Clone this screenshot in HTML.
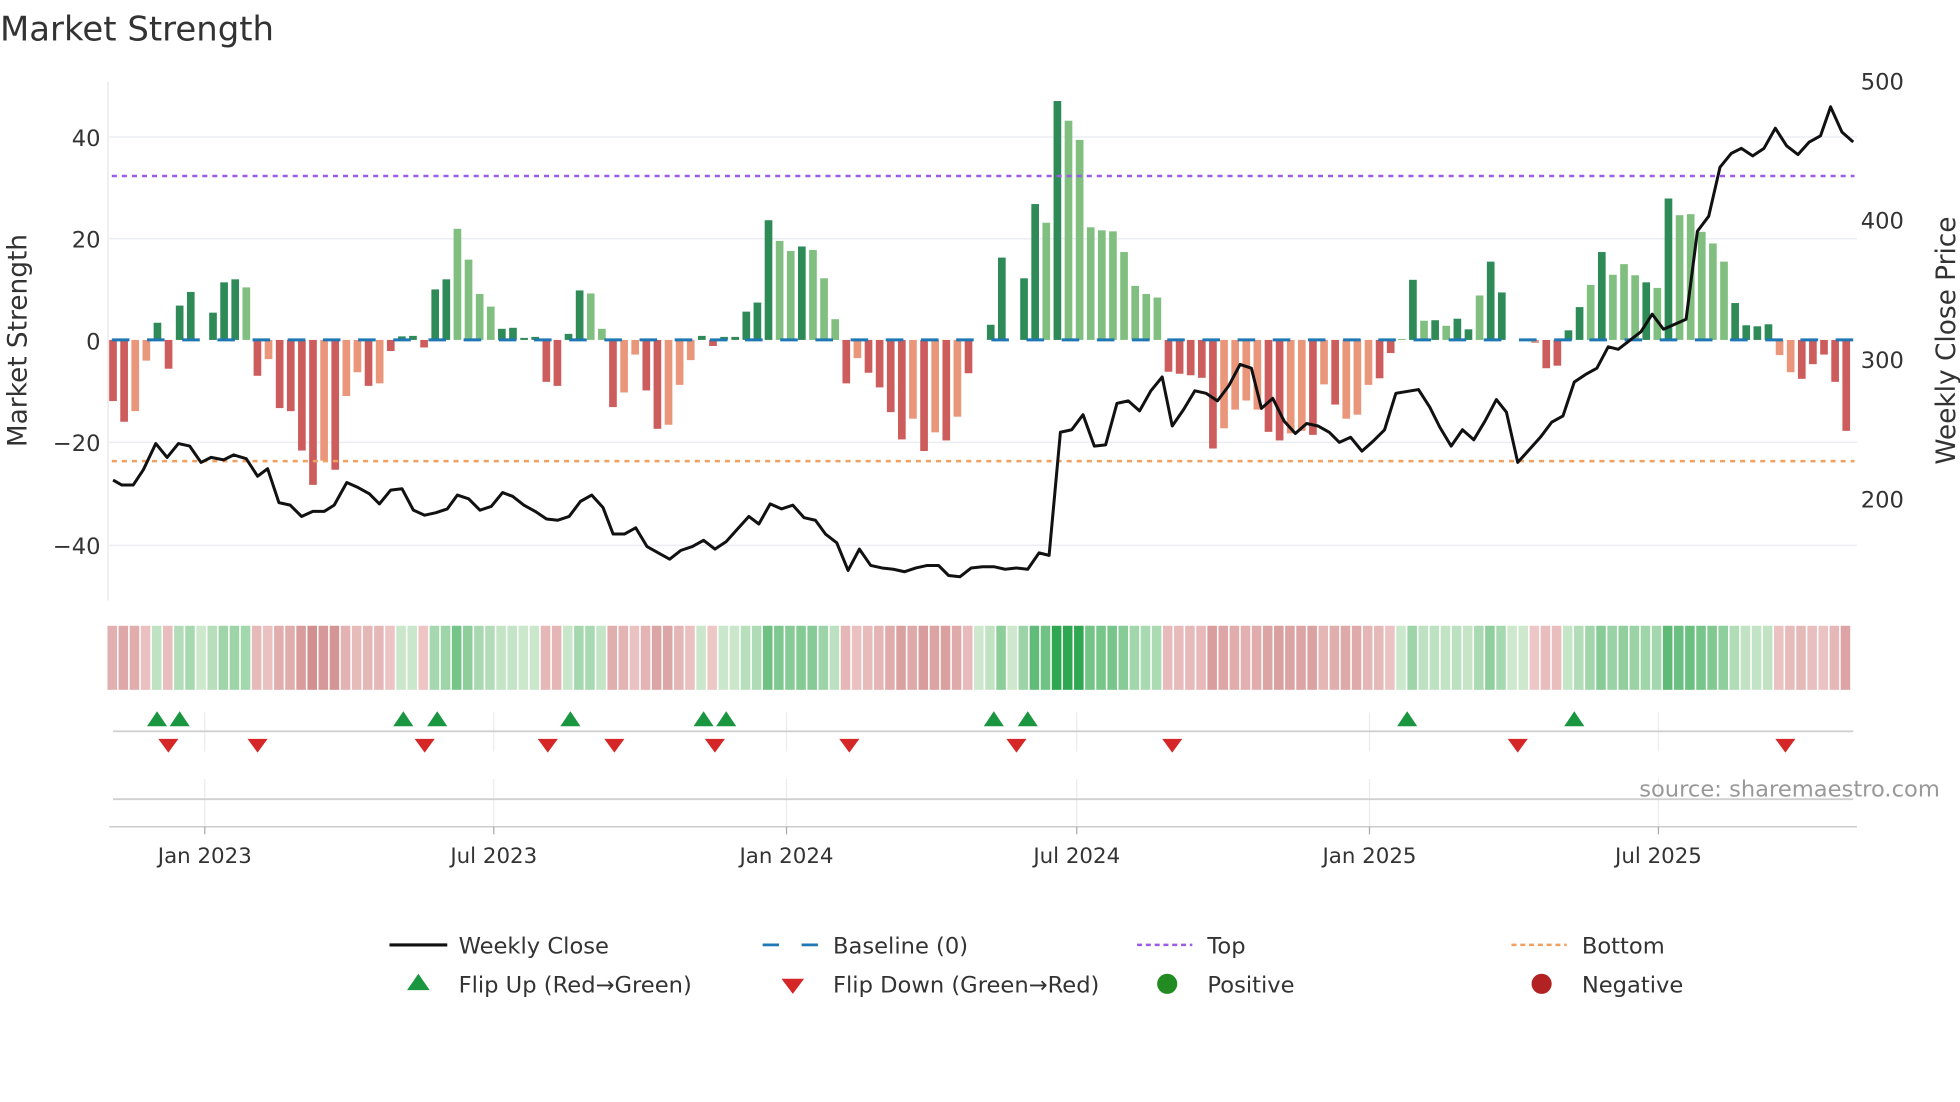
<!DOCTYPE html>
<html><head><meta charset="utf-8"><style>
html,body{margin:0;padding:0;background:#fff;width:1960px;height:1102px;overflow:hidden}
svg{display:block;font-family:"DejaVu Sans","Liberation Sans",sans-serif}
</style></head><body>
<svg id="s" width="1960" height="1102" viewBox="0 0 1560 877" xmlns="http://www.w3.org/2000/svg">
<text x="0" y="32" font-size="27" fill="#333">Market Strength</text>
<g stroke="#ebedf3" stroke-width="1.2">
<line x1="87" y1="109" x2="1478" y2="109"/><line x1="87" y1="190" x2="1478" y2="190"/>
<line x1="87" y1="352" x2="1478" y2="352"/><line x1="87" y1="434" x2="1478" y2="434"/>
</g>
<line x1="86" y1="65" x2="86" y2="478" stroke="#e6e6e6" stroke-width="1"/>
<g font-size="18" fill="#333" text-anchor="end">
<text x="80" y="116">40</text><text x="80" y="197">20</text><text x="80" y="278">0</text>
<text x="80" y="359">−20</text><text x="80" y="441">−40</text>
</g>
<g font-size="18" fill="#333">
<text x="1481" y="71">500</text><text x="1481" y="182">400</text><text x="1481" y="293">300</text><text x="1481" y="404">200</text>
</g>
<text transform="translate(21,271) rotate(-90)" font-size="21" fill="#333" text-anchor="middle">Market Strength</text>
<text transform="translate(1556,271) rotate(-90)" font-size="21" fill="#333" text-anchor="middle">Weekly Close Price</text>
<g id="bars"></g>
<line x1="89" y1="270.5" x2="1476" y2="270.5" stroke="#1f77b4" stroke-width="2.4" stroke-dasharray="14,14"/>
<line x1="89" y1="140" x2="1476" y2="140" stroke="#9b5de5" stroke-width="2" stroke-dasharray="4,4"/>
<line x1="89" y1="367" x2="1476" y2="367" stroke="#f0a060" stroke-width="2" stroke-dasharray="4,4"/>
<polyline fill="none" stroke="#111" stroke-width="2.4" stroke-linejoin="round" points="90,382 97,386 106,386 114,374 124,353 133,364 142,353 151,355 160,368 168,364 178,366 186,362 196,365 205,379 213,373 222,400 231,402 240,411 249,407 258,407 266,402 276,384 285,388 294,393 302,401 311,390 320,389 329,406 338,410 347,408 356,405 364,394 373,397 382,406 391,403 400,392 408,395 417,402 426,407 435,413 444,414 453,411 462,399 471,394 480,404 488,425 497,425 506,420 515,435 524,440 533,445 542,438 551,435 560,430 569,437 578,431 587,421 596,411 604,417 613,401 622,405 631,402 640,412 649,414 657,425 666,432 675,454 684,437 693,450 702,452 711,453 720,455 729,452 738,450 747,450 755,458 764,459 773,452 782,451 791,451 800,453 809,452 818,453 827,440 835,442 844,344 853,342 862,330 871,355 880,354 889,321 898,319 907,327 916,311 925,300 933,339 942,326 951,311 960,313 969,319 978,307 987,290 996,293 1004,325 1013,317 1022,335 1031,345 1040,337 1049,339 1058,344 1066,352 1075,348 1084,359 1093,351 1102,342 1111,313 1129,310 1138,324 1146,340 1155,355 1164,342 1173,350 1182,335 1191,318 1199,328 1208,368 1217,358 1226,348 1235,336 1244,331 1253,304 1262,298 1271,293 1280,276 1288,278 1297,271 1306,264 1315,250 1324,262 1333,258 1342,254 1351,184 1360,172 1369,133 1378,122 1386,118 1395,124 1404,118 1413,102 1422,116 1431,123 1440,113 1449,108 1457,85 1466,105 1475,113"/>
<g id="strip"></g>
<g stroke="#ececec" stroke-width="1">
<line x1="163" y1="567" x2="163" y2="598"/><line x1="393" y1="567" x2="393" y2="598"/><line x1="626" y1="567" x2="626" y2="598"/>
<line x1="857" y1="567" x2="857" y2="598"/><line x1="1090" y1="567" x2="1090" y2="598"/><line x1="1320" y1="567" x2="1320" y2="598"/>
<line x1="163" y1="620" x2="163" y2="658"/><line x1="393" y1="620" x2="393" y2="658"/><line x1="626" y1="620" x2="626" y2="658"/>
<line x1="857" y1="620" x2="857" y2="658"/><line x1="1090" y1="620" x2="1090" y2="658"/><line x1="1320" y1="620" x2="1320" y2="658"/>
</g>
<line x1="90" y1="582" x2="1475" y2="582" stroke="#d0d0d0" stroke-width="1.5"/>
<line x1="90" y1="636" x2="1475" y2="636" stroke="#d0d0d0" stroke-width="1.5"/>
<line x1="87" y1="658" x2="1478" y2="658" stroke="#ccc" stroke-width="1.2"/>
<g id="tri"></g>
<g stroke="#aaa" stroke-width="1">
<line x1="163" y1="658" x2="163" y2="664"/><line x1="393" y1="658" x2="393" y2="664"/><line x1="626" y1="658" x2="626" y2="664"/>
<line x1="857" y1="658" x2="857" y2="664"/><line x1="1090" y1="658" x2="1090" y2="664"/><line x1="1320" y1="658" x2="1320" y2="664"/>
</g>
<g font-size="17" fill="#333" text-anchor="middle">
<text x="163" y="687">Jan 2023</text><text x="393" y="687">Jul 2023</text><text x="626" y="687">Jan 2024</text>
<text x="857" y="687">Jul 2024</text><text x="1090" y="687">Jan 2025</text><text x="1320" y="687">Jul 2025</text>
</g>
<text x="1544" y="634" font-size="18" fill="#999" text-anchor="end">source: sharemaestro.com</text>
<g font-size="18" fill="#333">
<line x1="310" y1="752" x2="356" y2="752" stroke="#111" stroke-width="2.5"/><text x="365" y="759">Weekly Close</text>
<line x1="607" y1="752" x2="651" y2="752" stroke="#1f77b4" stroke-width="2.2" stroke-dasharray="13,18"/><text x="663" y="759">Baseline (0)</text>
<line x1="905" y1="752" x2="949" y2="752" stroke="#9b5de5" stroke-width="2" stroke-dasharray="4,3"/><text x="961" y="759">Top</text>
<line x1="1203" y1="752" x2="1247" y2="752" stroke="#f0a060" stroke-width="2" stroke-dasharray="4,3"/><text x="1259" y="759">Bottom</text>
<polygon points="324,788 342,788 333,775" fill="#1a9641"/><text x="365" y="790">Flip Up (Red→Green)</text>
<polygon points="622,779 640,779 631,791" fill="#d62728"/><text x="663" y="790">Flip Down (Green→Red)</text>
<circle cx="929" cy="783" r="8" fill="#228b22"/><text x="961" y="790">Positive</text>
<circle cx="1227" cy="783" r="8" fill="#b22222"/><text x="1259" y="790">Negative</text>
</g>
</svg>
<script>
var V=[-12.1,-16.2,-14.1,-4.1,3.4,-5.7,6.8,9.5,0,5.4,11.4,12,10.4,-7.1,-3.8,-13.5,-14.1,-21.9,-28.7,-23.9,-25.7,-11.1,-6.4,-9.1,-8.6,-2.2,0.7,0.8,-1.5,10,12,22,15.9,9.1,6.6,2.2,2.4,0.4,0.6,-8.3,-9.1,
1.2,9.8,9.2,2.2,-13.3,-10.4,-2.9,-10,-17.6,-16.8,-8.9,-4,0.8,-1.2,0.6,0.6,5.6,7.4,23.7,19.6,17.6,18.5,17.8,12.2,4.1,-8.6,-3.6,-6.5,-9.4,-14.3,-19.7,-15.6,-22,-18.3,-19.9,-15.2,-6.6,0,3,16.3,0,12.2,26.9,
23.2,47.3,43.4,39.6,22.3,21.7,21.5,17.4,10.7,9.1,8.4,-6.3,-6.7,-7,-7.5,-21.5,-17.5,-13.8,-12,-13.8,-18.2,-19.9,-18.5,-18,-18.8,-8.8,-12.8,-15.6,-14.8,-8.9,-7.6,-2.6,0.2,11.9,3.8,3.9,2.8,4.2,2.1,8.8,15.5,9.4,
0,0,-0.6,-5.6,-5.1,1.9,6.5,10.9,17.4,12.9,15,12.8,11.4,10.3,28,24.7,24.9,21.4,19.1,15.5,7.3,2.9,2.7,3.1,-3,-6.4,-7.7,-4.8,-2.9,-8.3,-18];
var C="rrssgrgg-gggLrsrrrrsrssrsgsrggGLLLLggg rr".replace(/ /g,'g')+
"ggLLrssrrsssgrggggGLLgLLLrsrrrrsrsrsg-gg-gg"+
"LGLLLLLLLLLrrrrrssssrrssrsrsssgGLgLgLgGL"+
"--rrsgggGLgLLLGLgLLLLLgrrrssrr";
var ns="http://www.w3.org/2000/svg",b=document.getElementById('bars'),st=document.getElementById('strip'),tr=document.getElementById('tri');
function el(t,a,p){var e=document.createElementNS(ns,t);for(var k in a)e.setAttribute(k,a[k]);p.appendChild(e);}
for(var i=0;i<V.length;i++){var v=V[i],cx=89.94+8.843*i,y0=270.5,h=Math.abs(v)*4.02;
var c=v>=0?(C[i]=='L'?'#80bf80':'#2e8b57'):(C[i]=='s'?'#e9967a':'#cd5c5c');
if(h>0)el('rect',{x:cx-3.05,y:v>0?y0-h:y0,width:6.1,height:h,fill:c},b);
var t=Math.min(Math.abs(v)/30,1),f;
if(v>=0){t=Math.min(v/40,1);f='rgb('+Math.round(205-160*t)+','+Math.round(232-65*t)+','+Math.round(205-125*t)+')';}
else{f='rgb('+Math.round(238-30*t)+','+Math.round(200-60*t)+','+Math.round(200-60*t)+')';}
el('rect',{x:cx-4.42,y:498,width:7.6,height:51,fill:f},st);}
[125,143,321,348,454,560,578,791,818,1120,1253].forEach(function(x){el('polygon',{points:(x-8)+',578 '+(x+8)+',578 '+x+',566',fill:'#1a9641'},tr);});
[134,205,338,436,489,569,676,809,933,1208,1421].forEach(function(x){el('polygon',{points:(x-8)+',588 '+(x+8)+',588 '+x+',599',fill:'#d62728'},tr);});
</script>
</body></html>
